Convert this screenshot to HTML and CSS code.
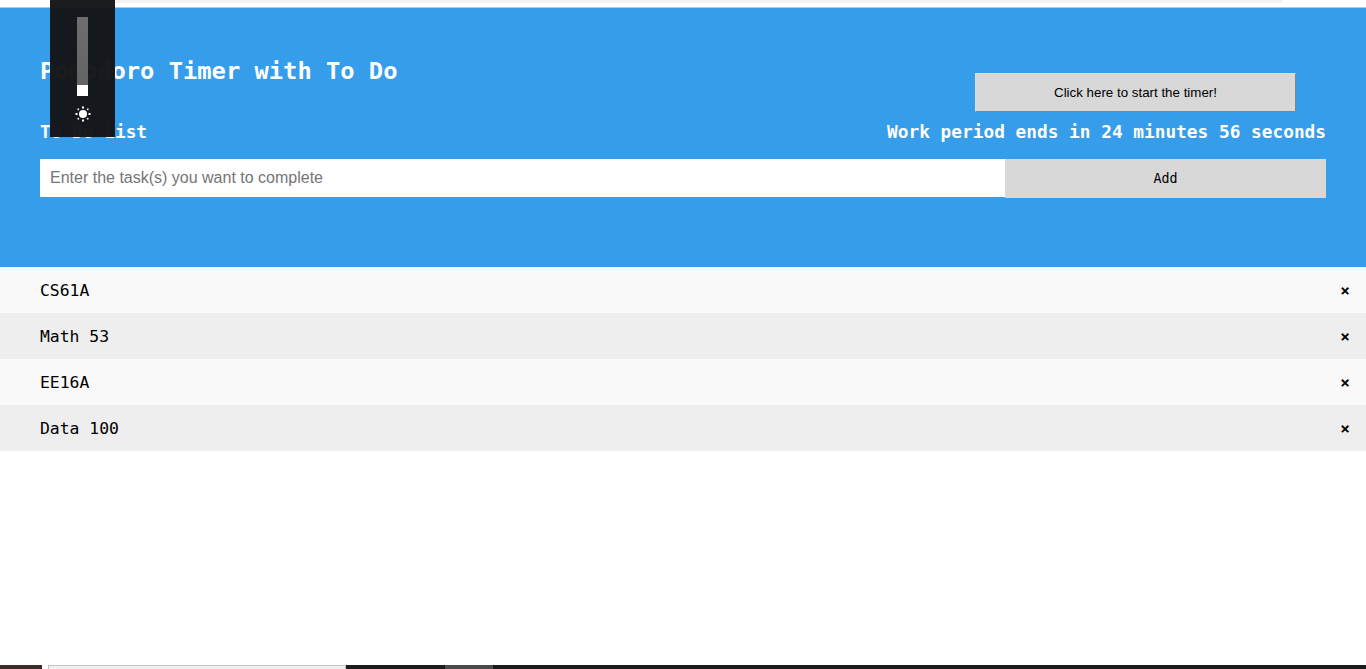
FILE: index.html
```html
<!DOCTYPE html>
<html lang="en">
<head>
    <meta charset="UTF-8">
    <title>Pomodoro Timer with To Do</title>
    <link rel="stylesheet" href="styles.css">
</head>
<body>
    <div class="browser-top"><div class="browser-tab"></div></div>

    <div class="header">
        <div class="title-row">
            <h1>Pomodoro Timer with To Do</h1>
            <button class="start-btn">Click here to start the timer!</button>
        </div>
        <div class="sub-row">
            <h2>To Do List</h2>
            <h2>Work period ends in 24 minutes 56 seconds</h2>
        </div>
        <div class="add-row">
            <input class="task-input" type="text" placeholder="Enter the task(s) you want to complete">
            <div class="add-btn">Add</div>
        </div>
    </div>

    <ul class="todo-list">
        <li><span>CS61A</span><span class="close">×</span></li>
        <li><span>Math 53</span><span class="close">×</span></li>
        <li><span>EE16A</span><span class="close">×</span></li>
        <li><span>Data 100</span><span class="close">×</span></li>
    </ul>

    <div class="taskbar">
        <div class="task-brown"></div>
        <div class="task-window"></div>
        <div class="task-dark"></div>
        <div class="task-grey"></div>
        <div class="task-dark task-rest"></div>
    </div>

    <div class="brightness">
        <div class="slider"><div class="slider-thumb"></div></div>
        <svg class="sun" width="16" height="16" viewBox="0 0 16 16" fill="#fff">
            <circle cx="8" cy="8" r="4"/>
            <rect x="7" y="0.5" width="2" height="2"/>
            <rect x="7" y="13.5" width="2" height="2"/>
            <rect x="0.5" y="7" width="2" height="2"/>
            <rect x="13.5" y="7" width="2" height="2"/>
            <rect x="2.5" y="2.5" width="1.6" height="1.6"/>
            <rect x="11.9" y="2.5" width="1.6" height="1.6"/>
            <rect x="2.5" y="11.9" width="1.6" height="1.6"/>
            <rect x="11.9" y="11.9" width="1.6" height="1.6"/>
        </svg>
    </div>
</body>
</html>
```

FILE: styles.css
```css
html, body {
    height: 100%;
}
body {
    margin: 0;
    display: flex;
    flex-direction: column;
    overflow: hidden;
    background: white;
    font-family: 'DejaVu Sans Mono', monospace;
}
.browser-top {
    height: 7px;
    flex: none;
    background: white;
    border-bottom: 1px solid #c4c4c4;
}
.browser-tab {
    height: 3px;
    width: 1168px;
    margin-left: 115px;
    background: #f1f3f4;
    border-bottom-right-radius: 4px;
}
.header {
    height: 259px;
    flex: none;
    box-sizing: border-box;
    padding: 0 40px;
    background: #369dea;
    color: white;
}
.title-row {
    height: 104px;
    display: flex;
    justify-content: space-between;
}
h1 {
    margin: 48px 0 0;
    font-size: 23.75px;
    line-height: 30px;
}
.start-btn {
    width: 321px;
    height: 39px;
    margin: 65px 30px 0 0;
    padding: 0;
    background: #d8d8d8;
    border: 1px solid;
    border-color: #dedede #858585 #858585 #dedede;
    font-family: 'Liberation Sans', Arial, sans-serif;
    font-size: 13.33px;
    color: black;
}
.sub-row {
    height: 47px;
    display: flex;
    justify-content: space-between;
}
h2 {
    margin: 8px 0 0;
    font-size: 17.8px;
    line-height: 24px;
}
.add-row {
    display: flex;
    align-items: flex-start;
}
.task-input {
    flex: 1;
    min-width: 0;
    height: 38px;
    box-sizing: border-box;
    padding: 0 10px;
    border: none;
    outline: none;
    background: white;
    font-family: 'Liberation Sans', Arial, sans-serif;
    font-size: 16px;
}
.task-input::placeholder {
    color: #757575;
    opacity: 1;
}
.add-btn {
    width: 321px;
    height: 39px;
    line-height: 40px;
    text-align: center;
    background: #d8d8d8;
    color: black;
    font-size: 13.33px;
}
.todo-list {
    margin: 0;
    padding: 0;
    list-style: none;
    flex: none;
}
.todo-list li {
    height: 46px;
    box-sizing: border-box;
    padding: 0 16px 0 40px;
    display: flex;
    justify-content: space-between;
    align-items: center;
    font-size: 16.4px;
    color: black;
    background: #f9f9f9;
}
.todo-list li:nth-child(even) {
    background: #eeeeee;
}
.close {
    font-weight: bold;
    font-size: 16px;
}
.taskbar {
    margin-top: auto;
    height: 4px;
    flex: none;
    display: flex;
}
.task-brown {
    width: 42px;
    background: #3e2c26;
}
.task-window {
    width: 298px;
    margin-left: 6px;
    margin-right: 0;
    box-sizing: border-box;
    background: #f0f0f0;
    border: 1px solid #c4c4c4;
    border-bottom: none;
    flex: none;
}
.task-dark {
    width: 99px;
    background: #1c1c1c;
    margin-left: 0;
}
.task-grey {
    width: 48px;
    background: #4a4a4a;
}
.task-rest {
    flex: 1;
}
.brightness {
    position: absolute;
    left: 50px;
    top: 0;
    width: 65px;
    height: 137px;
    background: rgba(20, 22, 25, 0.98);
}
.slider {
    position: absolute;
    left: 27px;
    top: 17px;
    width: 11px;
    height: 79px;
    background: linear-gradient(#6e6e6e, #626262);
}
.slider-thumb {
    position: absolute;
    left: 0;
    bottom: 0;
    width: 11px;
    height: 11px;
    background: white;
}
.sun {
    position: absolute;
    left: 25px;
    top: 106px;
}
```
